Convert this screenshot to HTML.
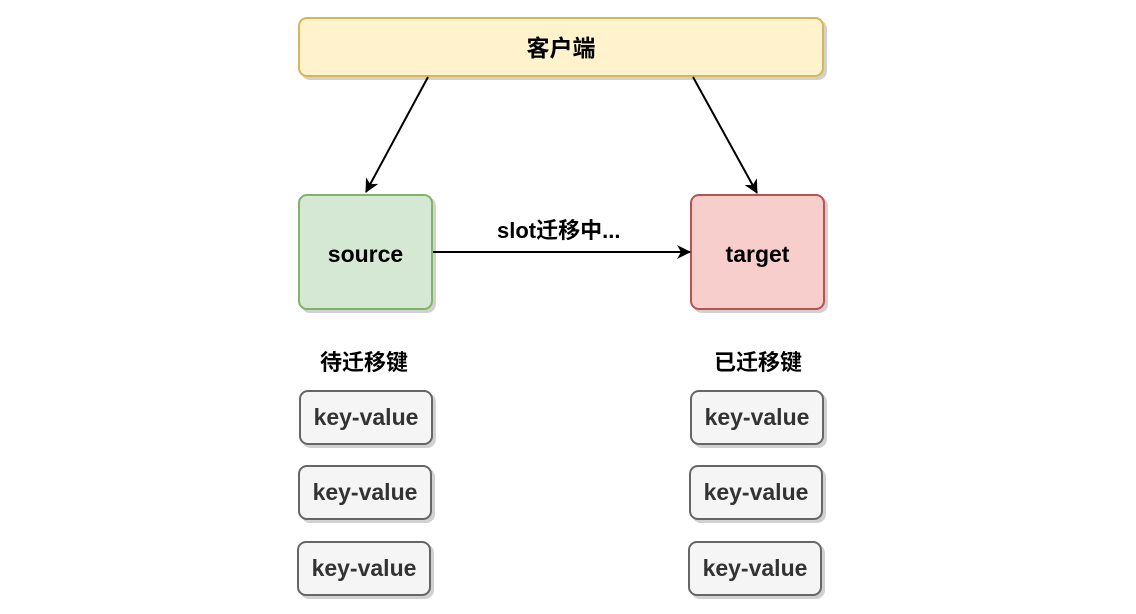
<!DOCTYPE html>
<html><head><meta charset="utf-8"><style>
body{margin:0;width:1136px;height:614px;background:#fff;position:relative;overflow:hidden;font-family:"Liberation Sans","Noto Sans CJK SC",sans-serif;font-weight:bold}
.b{position:absolute;box-sizing:border-box;border:2px solid;border-radius:9px;display:flex;align-items:center;justify-content:center;box-shadow:3px 3px 0 rgba(0,0,0,0.18)}
.kv{background:#f5f5f5;border-color:#666;color:#333;font-size:23px;width:134px;height:55px}
.t{position:absolute;font-size:22px;color:#000}
</style></head><body>
<div class="b" style="left:298px;top:17px;width:526px;height:60px;background:#fff2cc;border-color:#d6b656;font-size:23px;padding-bottom:2px">客户端</div>
<div class="b" style="left:298px;top:194px;width:135px;height:116px;background:#d5e8d4;border-color:#82b366;font-size:23px;padding-top:4px">source</div>
<div class="b" style="left:690px;top:194px;width:135px;height:116px;background:#f8cecc;border-color:#b85450;font-size:23px;padding-top:4px">target</div>
<div class="t" style="left:497px;top:213px;font-size:22px">slot迁移中...</div>
<div class="t" style="left:320px;top:345px">待迁移键</div>
<div class="t" style="left:714px;top:345px">已迁移键</div>
<div class="b kv" style="left:299px;top:390px">key-value</div>
<div class="b kv" style="left:298px;top:465px">key-value</div>
<div class="b kv" style="left:297px;top:541px">key-value</div>
<div class="b kv" style="left:690px;top:390px">key-value</div>
<div class="b kv" style="left:689px;top:465px">key-value</div>
<div class="b kv" style="left:688px;top:541px">key-value</div>
<svg width="1136" height="614" style="position:absolute;left:0;top:0">
<defs><marker id="a" markerWidth="14" markerHeight="14" refX="13" refY="7" orient="auto" markerUnits="userSpaceOnUse"><path d="M0,0 L14,7 L0,14 L4,7z" fill="#000"/></marker></defs>
<g stroke="#000" stroke-width="2" fill="none">
<line x1="428" y1="77" x2="366" y2="192" marker-end="url(#a)"/>
<line x1="693" y1="77" x2="757" y2="193" marker-end="url(#a)"/>
<line x1="433" y1="252" x2="690" y2="252" marker-end="url(#a)"/>
</g></svg>
</body></html>
